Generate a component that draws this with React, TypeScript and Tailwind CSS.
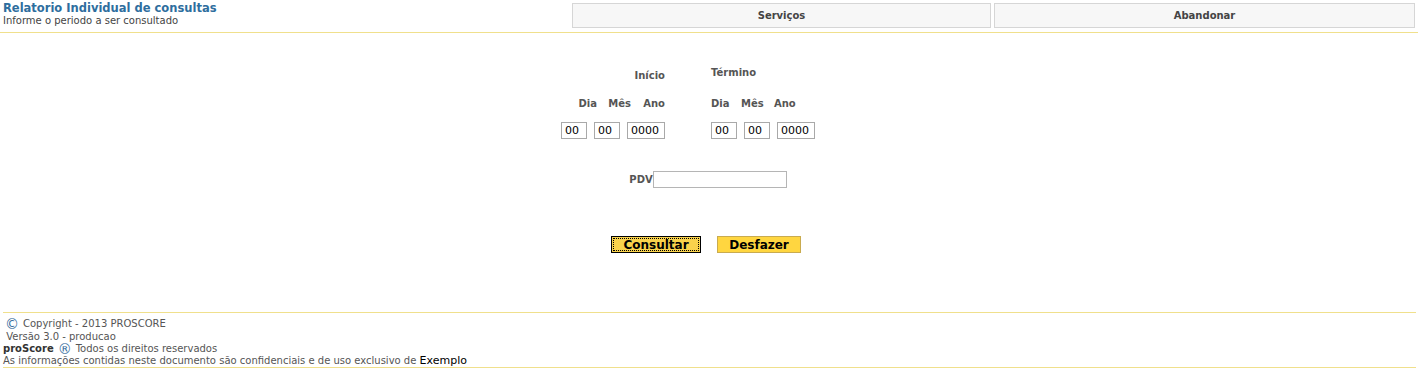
import React from 'react';

const font = { fontFamily: 'Verdana, "DejaVu Sans", sans-serif' };

const DateInput = ({ value, wide }: { value: string; wide?: boolean }) => (
  <div
    className={`h-[17px] border border-[#a9a9a9] bg-white pl-[3px] text-[11px] font-normal leading-[15px] text-black ${
      wide ? 'w-[38px]' : 'w-[26px]'
    }`}
  >
    {value}
  </div>
);

export default function App() {
  return (
    <div className="w-[1418px] h-[381px] bg-white text-[#555]" style={font}>
      {/* Header */}
      <div className="flex h-[33px] border-b border-[#f0e08c]">
        <div className="w-[572px] pl-[3px] pt-[1px]">
          <div className="text-[11.5px] font-bold leading-[14px] text-[#2e6e9e]">Relatorio Individual de consultas</div>
          <div className="text-[10px] leading-[11px] text-[#444]">Informe o periodo a ser consultado</div>
        </div>
        <div className="flex gap-[3px] pt-[3px]">
          <div className="flex h-[25px] w-[419px] items-center justify-center border border-[#d6d6d6] bg-[#f7f7f7] text-[10px] font-bold text-[#444]">
            Serviços
          </div>
          <div className="flex h-[25px] w-[421px] items-center justify-center border border-[#d6d6d6] bg-[#f7f7f7] text-[10px] font-bold text-[#444]">
            Abandonar
          </div>
        </div>
      </div>

      {/* Form */}
      <div className="flex justify-center pt-[34px]">
        <div className="flex w-[296px] pr-[42px] text-[10px] font-bold text-[#555]">
          <div className="w-[104px]">
            <div className="h-[31px] pt-[3px] text-right leading-[12px]">Início</div>
            <div className="flex leading-[12px]">
              <span className="w-[36px] text-right">Dia</span>
              <span className="w-[34px] text-right">Mês</span>
              <span className="w-[34px] text-right">Ano</span>
            </div>
            <div className="mt-[12px] flex gap-[7px]">
              <DateInput value="00" />
              <DateInput value="00" />
              <DateInput value="0000" wide />
            </div>
          </div>
          <div className="ml-[46px] w-[104px]">
            <div className="h-[31px] leading-[12px]">Término</div>
            <div className="flex leading-[12px]">
              <span className="w-[30px]">Dia</span>
              <span className="w-[33px]">Mês</span>
              <span className="w-[33px]">Ano</span>
            </div>
            <div className="mt-[12px] flex gap-[7px]">
              <DateInput value="00" />
              <DateInput value="00" />
              <DateInput value="0000" wide />
            </div>
          </div>
        </div>
      </div>

      <div className="mt-[32px] flex items-center justify-center pr-[2px] text-[10px] font-bold text-[#555]">
        <span className="leading-[12px]">PDV</span>
        <div className="h-[17px] w-[134px] border border-[#b5b5b5] bg-white" />
      </div>

      <div className="mt-[48px] flex justify-center gap-[16px] pr-[6px]">
        <div className="flex h-[17px] w-[90px] items-center justify-center border border-black bg-[#f9d24c] p-[1px]">
          <div className="flex h-full w-full items-center justify-center border border-dotted border-black text-[12px] font-bold leading-[12px] text-black">
            Consultar
          </div>
        </div>
        <div className="flex h-[17px] w-[84px] items-center justify-center border border-[#c9ab4f] bg-[#ffd640] text-[12px] font-bold leading-[12px] text-black">
          Desfazer
        </div>
      </div>

      {/* Footer */}
      <div className="mx-[3px] mt-[59px] w-[1413px] border-y border-[#f0e08c] pt-[5px] text-[10px] leading-[12px] text-[#555]">
        <div className="flex items-center">
          <span className="pl-[2px] pr-[4px] text-[14px] leading-[12px] text-[#3a6f9e]">©</span>
          <span>Copyright - 2013 PROSCORE</span>
        </div>
        <div className="mt-[1px]">&nbsp;Versão 3.0 - producao</div>
        <div className="flex items-center">
          <span className="font-bold text-[#333]">proScore</span>
          <span className="px-[4px] text-[14px] leading-[12px] text-[#3a6f9e]">®</span>
          <span>Todos os direitos reservados</span>
        </div>
        <div>
          As informações contidas neste documento são confidenciais e de uso exclusivo de{' '}
          <span className="text-[11px] text-black">Exemplo</span>
        </div>
      </div>
    </div>
  );
}
